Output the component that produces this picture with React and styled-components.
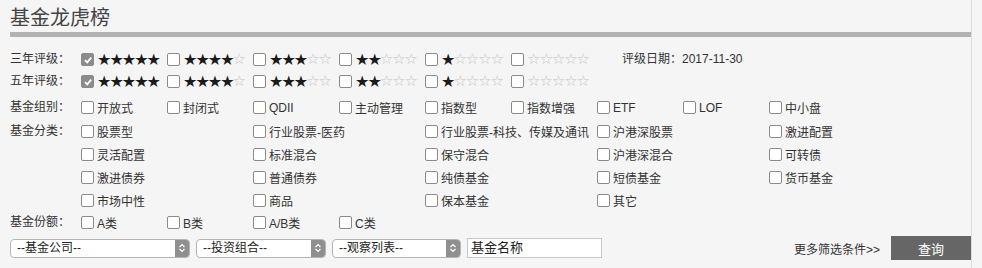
import React from 'react';
import styled, { createGlobalStyle } from 'styled-components';

const GlobalStyle = createGlobalStyle`
    html, body {
        margin: 0;
        padding: 0;
        background: #f5f5f5;
    }
    body {
        font-family: "Liberation Sans", "Noto Sans CJK SC", sans-serif;
        font-size: 12px;
        color: #333;
    }
`;

const ratings = [5, 4, 3, 2, 1, 0];
const groups = ['开放式', '封闭式', 'QDII', '主动管理', '指数型', '指数增强', 'ETF', 'LOF', '中小盘'];
const categories = [
    '股票型', '行业股票-医药', '行业股票-科技、传媒及通讯', '沪港深股票', '激进配置',
    '灵活配置', '标准混合', '保守混合', '沪港深混合', '可转债',
    '激进债券', '普通债券', '纯债基金', '短债基金', '货币基金',
    '市场中性', '商品', '保本基金', '其它',
];
const shares = ['A类', 'B类', 'A/B类', 'C类'];

function Check({ checked }) {
    return (
        <Box $checked={checked}>
            {checked && (
                <svg width="10" height="10" viewBox="0 0 10 10">
                    <path d="M2 5.2 L4.2 7.4 L8.2 2.6" fill="none" stroke="#fff" strokeWidth="1.8" />
                </svg>
            )}
        </Box>
    );
}

function Stars({ count }) {
    return (
        <StarRow>
            {[0, 1, 2, 3, 4].map((i) =>
                i < count ? <Star key={i} $on>★</Star> : <Star key={i}>☆</Star>
            )}
        </StarRow>
    );
}

function Select({ label, width }) {
    return (
        <SelectBox $width={width}>
            <span>{label}</span>
            <Arrow>
                <svg width="8" height="10" viewBox="0 0 8 10">
                    <path d="M1.5 4 L4 1.5 L6.5 4 M1.5 6 L4 8.5 L6.5 6" fill="none" stroke="#fff" strokeWidth="1.2" />
                </svg>
            </Arrow>
        </SelectBox>
    );
}

export default function App() {
    return (
        <>
            <GlobalStyle />
            <Container>
                <Title>基金龙虎榜</Title>
                <Divider />
                <Row $top={14}>
                    <Label>三年评级：</Label>
                    <Items $col={86} $count={6}>
                        {ratings.map((r) => (
                            <Item key={r}>
                                <Check checked={r === 5} />
                                <Stars count={r} />
                            </Item>
                        ))}
                    </Items>
                    <DateText>评级日期：2017-11-30</DateText>
                </Row>
                <Row $top={5}>
                    <Label>五年评级：</Label>
                    <Items $col={86} $count={6}>
                        {ratings.map((r) => (
                            <Item key={r}>
                                <Check checked={r === 5} />
                                <Stars count={r} />
                            </Item>
                        ))}
                    </Items>
                </Row>
                <Row $top={9}>
                    <Label>基金组别：</Label>
                    <Items $col={86} $count={9}>
                        {groups.map((g) => (
                            <Item key={g}>
                                <Check />
                                <span>{g}</span>
                            </Item>
                        ))}
                    </Items>
                </Row>
                <Row $top={7}>
                    <Label>基金分类：</Label>
                    <Items $col={172} $count={5} $gap={6}>
                        {categories.map((c) => (
                            <Item key={c}>
                                <Check />
                                <span>{c}</span>
                            </Item>
                        ))}
                    </Items>
                </Row>
                <Row $top={5}>
                    <Label>基金份额：</Label>
                    <Items $col={86} $count={4}>
                        {shares.map((s) => (
                            <Item key={s}>
                                <Check />
                                <span>{s}</span>
                            </Item>
                        ))}
                    </Items>
                </Row>
                <Toolbar>
                    <Select label="--基金公司--" width={180} />
                    <Select label="--投资组合--" width={130} />
                    <Select label="--观察列表--" width={129} />
                    <NameInput>基金名称</NameInput>
                    <Spacer />
                    <MoreLink>更多筛选条件&gt;&gt;</MoreLink>
                    <QueryButton>查询</QueryButton>
                </Toolbar>
            </Container>
        </>
    );
}

const Container = styled.div`
    width: 961px;
    height: 268px;
    padding: 5px 0 0 10px;
    box-sizing: content-box;
    border-right: 1px solid #dcdcdc;
`;

const Title = styled.h1`
    margin: 0;
    font-size: 20px;
    font-weight: normal;
    color: #444;
    line-height: 26px;
    height: 26px;
`;

const Divider = styled.div`
    height: 5px;
    margin-top: 1px;
    background: #b2b2b2;
`;

const Row = styled.div`
    display: flex;
    align-items: flex-start;
    margin-top: ${(p) => p.$top}px;
`;

const Label = styled.div`
    width: 71px;
    flex-shrink: 0;
    line-height: 17px;
    color: #333;
`;

const Items = styled.div`
    display: grid;
    grid-template-columns: repeat(${(p) => p.$count}, ${(p) => p.$col}px);
    row-gap: ${(p) => p.$gap || 0}px;
`;

const Item = styled.label`
    display: flex;
    align-items: center;
    gap: 3px;
    height: 17px;
    white-space: nowrap;
    color: #333;
`;

const Box = styled.span`
    width: 11px;
    height: 11px;
    border: 1px solid #8a8a8a;
    border-radius: 2px;
    background: ${(p) => (p.$checked ? '#8c8c8c' : '#fff')};
    display: inline-flex;
    align-items: center;
    justify-content: center;
    flex-shrink: 0;
`;

const StarRow = styled.span`
    display: inline-flex;
    font-family: "DejaVu Sans", sans-serif;
    line-height: 17px;
`;

const Star = styled.span`
    width: 12.4px;
    text-align: center;
    color: ${(p) => (p.$on ? '#1a1a1a' : '#c4c4c4')};
    font-size: ${(p) => (p.$on ? '16px' : '15px')};
`;

const DateText = styled.div`
    margin-left: 25px;
    line-height: 17px;
    color: #333;
`;

const Toolbar = styled.div`
    display: flex;
    align-items: center;
    margin-top: 5px;
    gap: 6px;
    width: 961px;
`;

const SelectBox = styled.div`
    width: ${(p) => p.$width}px;
    height: 19px;
    box-sizing: border-box;
    border: 1px solid #b5b5b5;
    border-radius: 4px;
    background: #fff;
    display: flex;
    align-items: center;
    justify-content: space-between;
    padding-left: 6px;
    overflow: hidden;
    color: #222;
    span {
        line-height: 17px;
    }
`;

const Arrow = styled.div`
    width: 14px;
    height: 17px;
    background: #8f8f8f;
    display: flex;
    align-items: center;
    justify-content: center;
`;

const NameInput = styled.div`
    width: 135px;
    height: 20px;
    box-sizing: border-box;
    border: 1px solid #c8c8c8;
    background: #fff;
    padding-left: 3px;
    line-height: 18px;
    font-size: 13px;
    color: #222;
`;

const Spacer = styled.div`
    flex: 1;
`;

const MoreLink = styled.span`
    color: #333;
    margin-right: 5px;
`;

const QueryButton = styled.button`
    width: 80px;
    height: 24px;
    border: none;
    background: #666;
    color: #fff;
    font-family: inherit;
    font-size: 13px;
    padding: 0;
`;
